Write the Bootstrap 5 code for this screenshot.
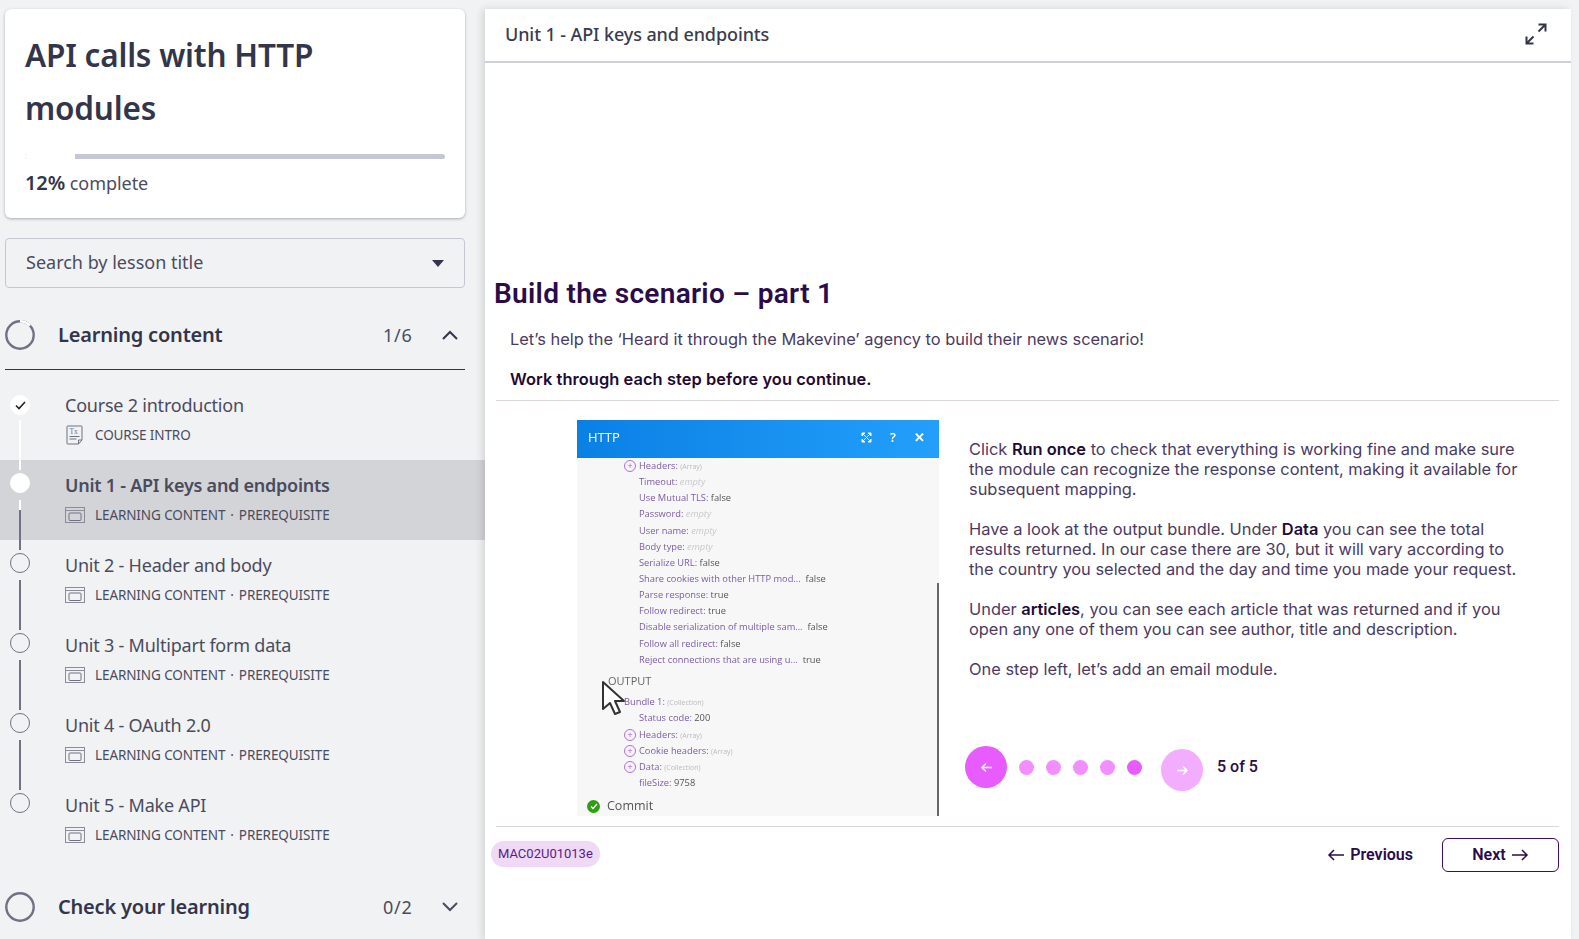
<!DOCTYPE html>
<html lang="en">
<head>
<meta charset="utf-8">
<title>API calls with HTTP modules</title>
<link href="https://cdn.jsdelivr.net/npm/bootstrap@5.3.0/dist/css/bootstrap.min.css" rel="stylesheet">
<style>
html,body{height:939px;overflow:hidden}
body{background:#f1f2f4;font-family:"Noto Sans",sans-serif;color:#33354a}
.shell{height:939px}
.side{width:485px;flex:none;padding:9px 0 0}
.title-card{width:460px;height:209px;margin-left:5px;border:0;border-radius:6px;box-shadow:0 1px 3px rgba(0,0,0,.3);padding:19px 20px 0}
.title-card h1{font-size:31.5px;line-height:53px;font-weight:600;letter-spacing:-.2px;margin:0;color:#33354a}
.prog{height:5px;margin-top:20px;background:#c5c8d4;border-radius:3px}
.prog .progress-bar{background:#fff}
.prog-text{font-size:18px;letter-spacing:-.05px;line-height:24px;margin-top:12px;color:#4a4c5e}
.prog-text b{font-weight:600;color:#33354a;font-size:20px;letter-spacing:-.1px}
.lesson-search{width:460px;height:50px;margin:20px 0 0 5px;border:1px solid #c5c8d4;border-radius:4px;padding:0 20px 2px;font-size:18px;letter-spacing:0;color:#4a4c5e}
.lesson-search svg{margin-top:2px}
.sec-head{height:46px;margin:24px 20px 0 5px;gap:0}
.sec-head .sec-name{font-size:20px;font-weight:600;letter-spacing:-.2px;margin-left:23px;color:#33354a;width:325px}
.sec-head .sec-count{font-size:18px;letter-spacing:.7px;color:#4a4c5e;width:34px}
.sec-head .chev{margin-left:25px}
.sec-rule{height:1px;background:#33354a;margin:11px 20px 0 5px}
.lessons{margin-top:10px}
.les{height:80px;padding-left:10px;position:relative}
.les.now{background:#d3d4d8}
.les-dot{width:20px;height:20px;border-radius:50%;border:1px solid #6f7282;margin-top:13px;flex:none;background:transparent}
.les-dot.done,.les-dot.cur{background:#fff;border-color:#fff}
.les-dot.done{margin-top:15px;display:flex;align-items:center;justify-content:center}
.les-line{position:absolute;left:19px;top:40px;width:2px;height:50px;background:#6f7282;z-index:1}
.les-line.white{background:#fff}
.les-line.part{background:linear-gradient(#fff 10px,#6f7282 10px)}
.les-body{margin-left:35px;padding-top:11px}
.les-name{font-size:18px;line-height:28px;letter-spacing:-.22px;color:#4a4c5e}
.les-name.strong{font-weight:600;color:#4a4c5e;letter-spacing:-.25px}
.les-meta{font-size:13.5px;line-height:20px;letter-spacing:-.1px;color:#4a4c5e;margin-top:6px;gap:10px}
.les-meta .sep{padding:0 5px}
.sec-head.second{margin-top:24px}
.panel{flex:1;margin:9px 8px 0 0;background:#fff;box-shadow:-3px 0 7px rgba(0,0,0,.12);border:0;border-radius:0;height:930px}
.panel-top{height:54px;border-bottom:2px solid #cfd0da;padding:0 24px 2px 20px}
.panel-top span{font-size:18px;font-weight:500;letter-spacing:-.1px;color:#3a3c50}
.panel-body{font-family:Inter,sans-serif;color:#4a3a63;padding-left:9px;padding-right:12px}
.panel-body h2{font-family:Roboto,sans-serif;font-weight:600;font-size:28px;line-height:34px;letter-spacing:.3px;color:#2b0b4a;margin:214px 0 0}
.lead-a{font-size:16.4px;line-height:24px;margin:16px 0 0 16px}
.lead-b{font-size:16.4px;line-height:24px;margin:16px 0 9px 16px;font-weight:600;letter-spacing:.08px;color:#1f0a35}
.hair{height:1px;background:#dcd5dc;margin-left:2px}
.pane-row{height:425px;padding-left:83px}
.shot{width:362px;height:396px;margin-top:19px;background:#f7f7f7;position:relative;flex:none;filter:blur(.45px);font-family:"Open Sans",sans-serif;font-size:9.3px;color:#7c5aa8;overflow:hidden}
.shot-head{height:38px;background:linear-gradient(90deg,#0a80e4,#239ffb);color:#fff;font-size:13px;padding:0 14px 3px 11px}
.shot-head .ctl{gap:18px;font-size:13px;font-weight:600}
.shot-rows{padding:0 0 0 62px}
.srow{height:16.15px;line-height:16px;white-space:nowrap;position:relative}
.srow i{font-style:italic;color:#c9c9c9}
.srow u{text-decoration:none;color:#555}
.srow small{font-size:7px;color:#bbb}
.srow .plus{position:absolute;left:-15px;top:2px;width:12px;height:12px;border:1px solid #b26be6;border-radius:50%;color:#a65ce0;font-size:9px;line-height:9px;text-align:center}
.srow.bundle{margin-left:-15px}
.out-label{font-size:11px;color:#666;margin:4px 0 0 -31px;height:22.5px;line-height:18px}
.commit{position:absolute;left:10px;top:377px;color:#555;font-size:12.5px;line-height:18px;gap:7px}
.commit span{width:13px;height:13px;border-radius:50%;background:#2d9f10;display:flex;align-items:center;justify-content:center}
.sbar{position:absolute;left:360px;top:163px;width:2px;height:233px;background:#666}
.cursor{position:absolute;left:24px;top:260px}
.copy{margin-left:30px;margin-top:19px;width:560px;font-size:16.4px;line-height:20px;color:#4a3a63;padding-top:19px}
.copy p{margin:0 0 20px}
.copy b{font-weight:600;color:#1f0a35}
.slider{margin-top:67px;margin-left:-4px;height:46px;position:relative}
.round{width:42px;height:42px;border-radius:50%;background:#e85bff;flex:none;display:flex;align-items:center;justify-content:center}
.round.off{background:#f3adff;margin-top:3px;margin-left:19px}
.pip{width:15px;height:15px;border-radius:50%;background:#f18fff;flex:none;margin:14px 0 0 12px}
.pip.on{background:#e85bff}
.of{font-family:Roboto,sans-serif;font-weight:500;font-size:16px;color:#2b0b4a;margin:11px 0 0 14px}
.foot{height:60px;padding-top:11px;font-family:Roboto,sans-serif}
.chip{background:#efd9f5;color:#5a1a8a;font-size:13px;border-radius:13px;height:26px;line-height:26px;padding:0 7px;margin-left:-3px;margin-top:3px}
.foot-act{gap:29px}
.prev-link{font-weight:600;font-size:16px;color:#2b0b4a;gap:5px}
.next-btn{width:117px;height:34px;border:1.5px solid #3b0a6b;border-radius:6px;font-weight:600;font-size:16px;color:#2b0b4a;gap:5px;padding:0}
</style>
</head>
<body>
<div class="shell d-flex">
  <aside class="side">
    <div class="card title-card">
      <h1>API calls with HTTP<br>modules</h1>
      <div class="progress prog" role="progressbar" aria-valuenow="12" aria-valuemin="0" aria-valuemax="100"><div class="progress-bar" style="width:12%"></div></div>
      <div class="prog-text"><b>12%</b> complete</div>
    </div>
    <div class="lesson-search d-flex align-items-center justify-content-between">
      <span>Search by lesson title</span>
      <svg width="12" height="7" viewBox="0 0 12 7"><path d="M0 0h12L6 7z" fill="#33354a"/></svg>
    </div>
    <div class="sec-head d-flex align-items-center">
      <svg width="30" height="30" viewBox="0 0 30 30"><circle cx="15" cy="15" r="13.7" fill="none" stroke="#6f7282" stroke-width="2.4"/><path d="M15 1.300A13.700 13.700 0 0 1 25 5.600" fill="none" stroke="#fff" stroke-width="2.4"/></svg>
      <span class="sec-name">Learning content</span>
      <span class="sec-count">1/6</span>
      <svg width="16" height="10" viewBox="0 0 16 10" class="chev"><path d="M1 9l7-7 7 7" fill="none" stroke="#33354a" stroke-width="2"/></svg>
    </div>
    <div class="sec-rule"></div>
    <div class="lessons">
      <div class="les d-flex">
        <div class="les-dot done"><svg width="11" height="9" viewBox="0 0 11 9"><path d="M1 4.500l3 3 6-6.500" fill="none" stroke="#222" stroke-width="1.600"/></svg></div>
        <div class="les-line white"></div>
        <div class="les-body">
          <div class="les-name">Course 2 introduction</div>
          <div class="les-meta d-flex align-items-center">
            <svg width="20" height="20" viewBox="0 0 20 20"><path d="M2.500 1h14a.5.5 0 0 1 .5.5V15l-3.500 4h-11a.5.5 0 0 1-.5-.5V1.500A.5.5 0 0 1 2.500 1z" fill="none" stroke="#6f7282"/><path d="M13.500 19v-4H17" fill="none" stroke="#6f7282"/><path d="M4.500 11.500h10M4.500 14h7" stroke="#6f7282"/><text x="4.500" y="8.500" font-size="7.500" fill="#6f7282" font-family="Liberation Serif">Tx</text></svg>
            <span>COURSE INTRO</span>
          </div>
        </div>
      </div>
      <div class="les now d-flex">
        <div class="les-dot cur"></div>
        <div class="les-line part"></div>
        <div class="les-body">
          <div class="les-name strong">Unit 1 - API keys and endpoints</div>
          <div class="les-meta d-flex align-items-center"><svg width="20" height="16" viewBox="0 0 20 16"><rect x=".5" y=".5" width="19" height="15" fill="none" stroke="#8a8c9a"/><path d="M.5 3.500h19" stroke="#8a8c9a"/><rect x="4" y="6" width="12" height="7.500" rx="1" fill="none" stroke="#6f7282"/></svg><span>LEARNING CONTENT<span class="sep">·</span>PREREQUISITE</span></div>
        </div>
      </div>
      <div class="les d-flex">
        <div class="les-dot"></div>
        <div class="les-line"></div>
        <div class="les-body">
          <div class="les-name">Unit 2 - Header and body</div>
          <div class="les-meta d-flex align-items-center"><svg width="20" height="16" viewBox="0 0 20 16"><rect x=".5" y=".5" width="19" height="15" fill="none" stroke="#8a8c9a"/><path d="M.5 3.500h19" stroke="#8a8c9a"/><rect x="4" y="6" width="12" height="7.500" rx="1" fill="none" stroke="#6f7282"/></svg><span>LEARNING CONTENT<span class="sep">·</span>PREREQUISITE</span></div>
        </div>
      </div>
      <div class="les d-flex">
        <div class="les-dot"></div>
        <div class="les-line"></div>
        <div class="les-body">
          <div class="les-name">Unit 3 - Multipart form data</div>
          <div class="les-meta d-flex align-items-center"><svg width="20" height="16" viewBox="0 0 20 16"><rect x=".5" y=".5" width="19" height="15" fill="none" stroke="#8a8c9a"/><path d="M.5 3.500h19" stroke="#8a8c9a"/><rect x="4" y="6" width="12" height="7.500" rx="1" fill="none" stroke="#6f7282"/></svg><span>LEARNING CONTENT<span class="sep">·</span>PREREQUISITE</span></div>
        </div>
      </div>
      <div class="les d-flex">
        <div class="les-dot"></div>
        <div class="les-line"></div>
        <div class="les-body">
          <div class="les-name">Unit 4 - OAuth 2.0</div>
          <div class="les-meta d-flex align-items-center"><svg width="20" height="16" viewBox="0 0 20 16"><rect x=".5" y=".5" width="19" height="15" fill="none" stroke="#8a8c9a"/><path d="M.5 3.500h19" stroke="#8a8c9a"/><rect x="4" y="6" width="12" height="7.500" rx="1" fill="none" stroke="#6f7282"/></svg><span>LEARNING CONTENT<span class="sep">·</span>PREREQUISITE</span></div>
        </div>
      </div>
      <div class="les d-flex">
        <div class="les-dot"></div>
        <div class="les-body">
          <div class="les-name">Unit 5 - Make API</div>
          <div class="les-meta d-flex align-items-center"><svg width="20" height="16" viewBox="0 0 20 16"><rect x=".5" y=".5" width="19" height="15" fill="none" stroke="#8a8c9a"/><path d="M.5 3.500h19" stroke="#8a8c9a"/><rect x="4" y="6" width="12" height="7.500" rx="1" fill="none" stroke="#6f7282"/></svg><span>LEARNING CONTENT<span class="sep">·</span>PREREQUISITE</span></div>
        </div>
      </div>
    </div>
    <div class="sec-head second d-flex align-items-center">
      <svg width="30" height="30" viewBox="0 0 30 30"><circle cx="15" cy="15" r="13.7" fill="none" stroke="#6f7282" stroke-width="2.4"/></svg>
      <span class="sec-name">Check your learning</span>
      <span class="sec-count">0/2</span>
      <svg width="16" height="10" viewBox="0 0 16 10" class="chev"><path d="M1 1l7 7 7-7" fill="none" stroke="#4a4c5e" stroke-width="2"/></svg>
    </div>
  </aside>
  <main class="card panel">
    <div class="panel-top d-flex align-items-center justify-content-between">
      <span>Unit 1 - API keys and endpoints</span>
      <svg width="22" height="22" viewBox="0 0 22 22"><path d="M13.500 1.500h7v7M20.500 1.500l-7 7M8.500 20.500h-7v-7M1.500 20.500l7-7" fill="none" stroke="#33354a" stroke-width="2"/></svg>
    </div>
    <div class="panel-body">
      <h2>Build the scenario – part 1</h2>
      <p class="lead-a">Let’s help the ‘Heard it through the Makevine’ agency to build their news scenario!</p>
      <p class="lead-b">Work through each step before you continue.</p>
      <div class="hair"></div>
      <div class="pane-row d-flex">
        <div class="shot">
          <div class="shot-head d-flex align-items-center justify-content-between">
            <span>HTTP</span>
            <span class="ctl d-flex align-items-center">
              <svg width="11" height="11" viewBox="0 0 11 11"><path d="M1 1h3L1 4zM10 1v3L7 1zM1 10V7l3 3zM10 10H7l3-3zM3 3l5 5M8 3l-5 5" fill="#fff" stroke="#fff"/></svg>
              <span>?</span><span>✕</span>
            </span>
          </div>
          <div class="shot-rows">
            <div class="srow"><span class="plus">+</span>Headers: <small>(Array)</small></div>
            <div class="srow">Timeout: <i>empty</i></div>
            <div class="srow">Use Mutual TLS: <u>false</u></div>
            <div class="srow">Password: <i>empty</i></div>
            <div class="srow">User name: <i>empty</i></div>
            <div class="srow">Body type: <i>empty</i></div>
            <div class="srow">Serialize URL: <u>false</u></div>
            <div class="srow">Share cookies with other HTTP mod... &nbsp;<u>false</u></div>
            <div class="srow">Parse response: <u>true</u></div>
            <div class="srow">Follow redirect: <u>true</u></div>
            <div class="srow">Disable serialization of multiple sam... &nbsp;<u>false</u></div>
            <div class="srow">Follow all redirect: <u>false</u></div>
            <div class="srow">Reject connections that are using u... &nbsp;<u>true</u></div>
            <div class="out-label">OUTPUT</div>
            <div class="srow bundle">Bundle 1: <small>(Collection)</small></div>
            <div class="srow">Status code: <u>200</u></div>
            <div class="srow"><span class="plus">+</span>Headers: <small>(Array)</small></div>
            <div class="srow"><span class="plus">+</span>Cookie headers: <small>(Array)</small></div>
            <div class="srow"><span class="plus">+</span>Data: <small>(Collection)</small></div>
            <div class="srow">fileSize: <u>9758</u></div>
          </div>
          <div class="commit d-flex align-items-center"><span><svg width="8" height="7" viewBox="0 0 8 7"><path d="M1 3.500l2 2 4-4.500" fill="none" stroke="#fff" stroke-width="1.400"/></svg></span>Commit</div>
          <div class="sbar"></div>
          <svg class="cursor" width="24" height="36" viewBox="0 0 24 36"><path d="M2 2v27l7-6 5 11 5-2-5-11h9z" fill="#fff" stroke="#333" stroke-width="2" stroke-linejoin="round"/></svg>
        </div>
        <div class="copy">
          <p>Click <b>Run once</b> to check that everything is working fine and make sure the module can recognize the response content, making it available for subsequent mapping.</p>
          <p>Have a look at the output bundle. Under <b>Data</b> you can see the total results returned. In our case there are 30, but it will vary according to the country you selected and the day and time you made your request.</p>
          <p>Under <b>articles</b>, you can see each article that was returned and if you open any one of them you can see author, title and description.</p>
          <p>One step left, let’s add an email module.</p>
          <div class="slider d-flex align-items-start">
            <span class="round"><svg width="13" height="11" viewBox="0 0 13 11"><path d="M12 5.500H2M6 1.500l-4 4 4 4" fill="none" stroke="#fff" stroke-width="1.500"/></svg></span>
            <span class="pip"></span><span class="pip"></span><span class="pip"></span><span class="pip"></span><span class="pip on"></span>
            <span class="round off"><svg width="13" height="11" viewBox="0 0 13 11"><path d="M1 5.500h10M7 1.500l4 4-4 4" fill="none" stroke="#fff" stroke-width="1.500"/></svg></span>
            <span class="of">5 of 5</span>
          </div>
        </div>
      </div>
      <div class="hair"></div>
      <div class="foot d-flex justify-content-between align-items-start">
        <span class="chip">MAC02U01013e</span>
        <div class="foot-act d-flex align-items-center">
          <span class="prev-link d-flex align-items-center"><svg width="18" height="12" viewBox="0 0 18 12"><path d="M17 6H2M7 1L2 6l5 5" fill="none" stroke="#2b0b4a" stroke-width="1.500"/></svg>Previous</span>
          <button class="btn next-btn d-flex align-items-center justify-content-center">Next <svg width="18" height="12" viewBox="0 0 18 12"><path d="M1 6h15M11 1l5 5-5 5" fill="none" stroke="#2b0b4a" stroke-width="1.500"/></svg></button>
        </div>
      </div>
    </div>
  </main>
</div>
<script src="https://cdn.jsdelivr.net/npm/bootstrap@5.3.0/dist/js/bootstrap.bundle.min.js"></script>
</body>
</html>
